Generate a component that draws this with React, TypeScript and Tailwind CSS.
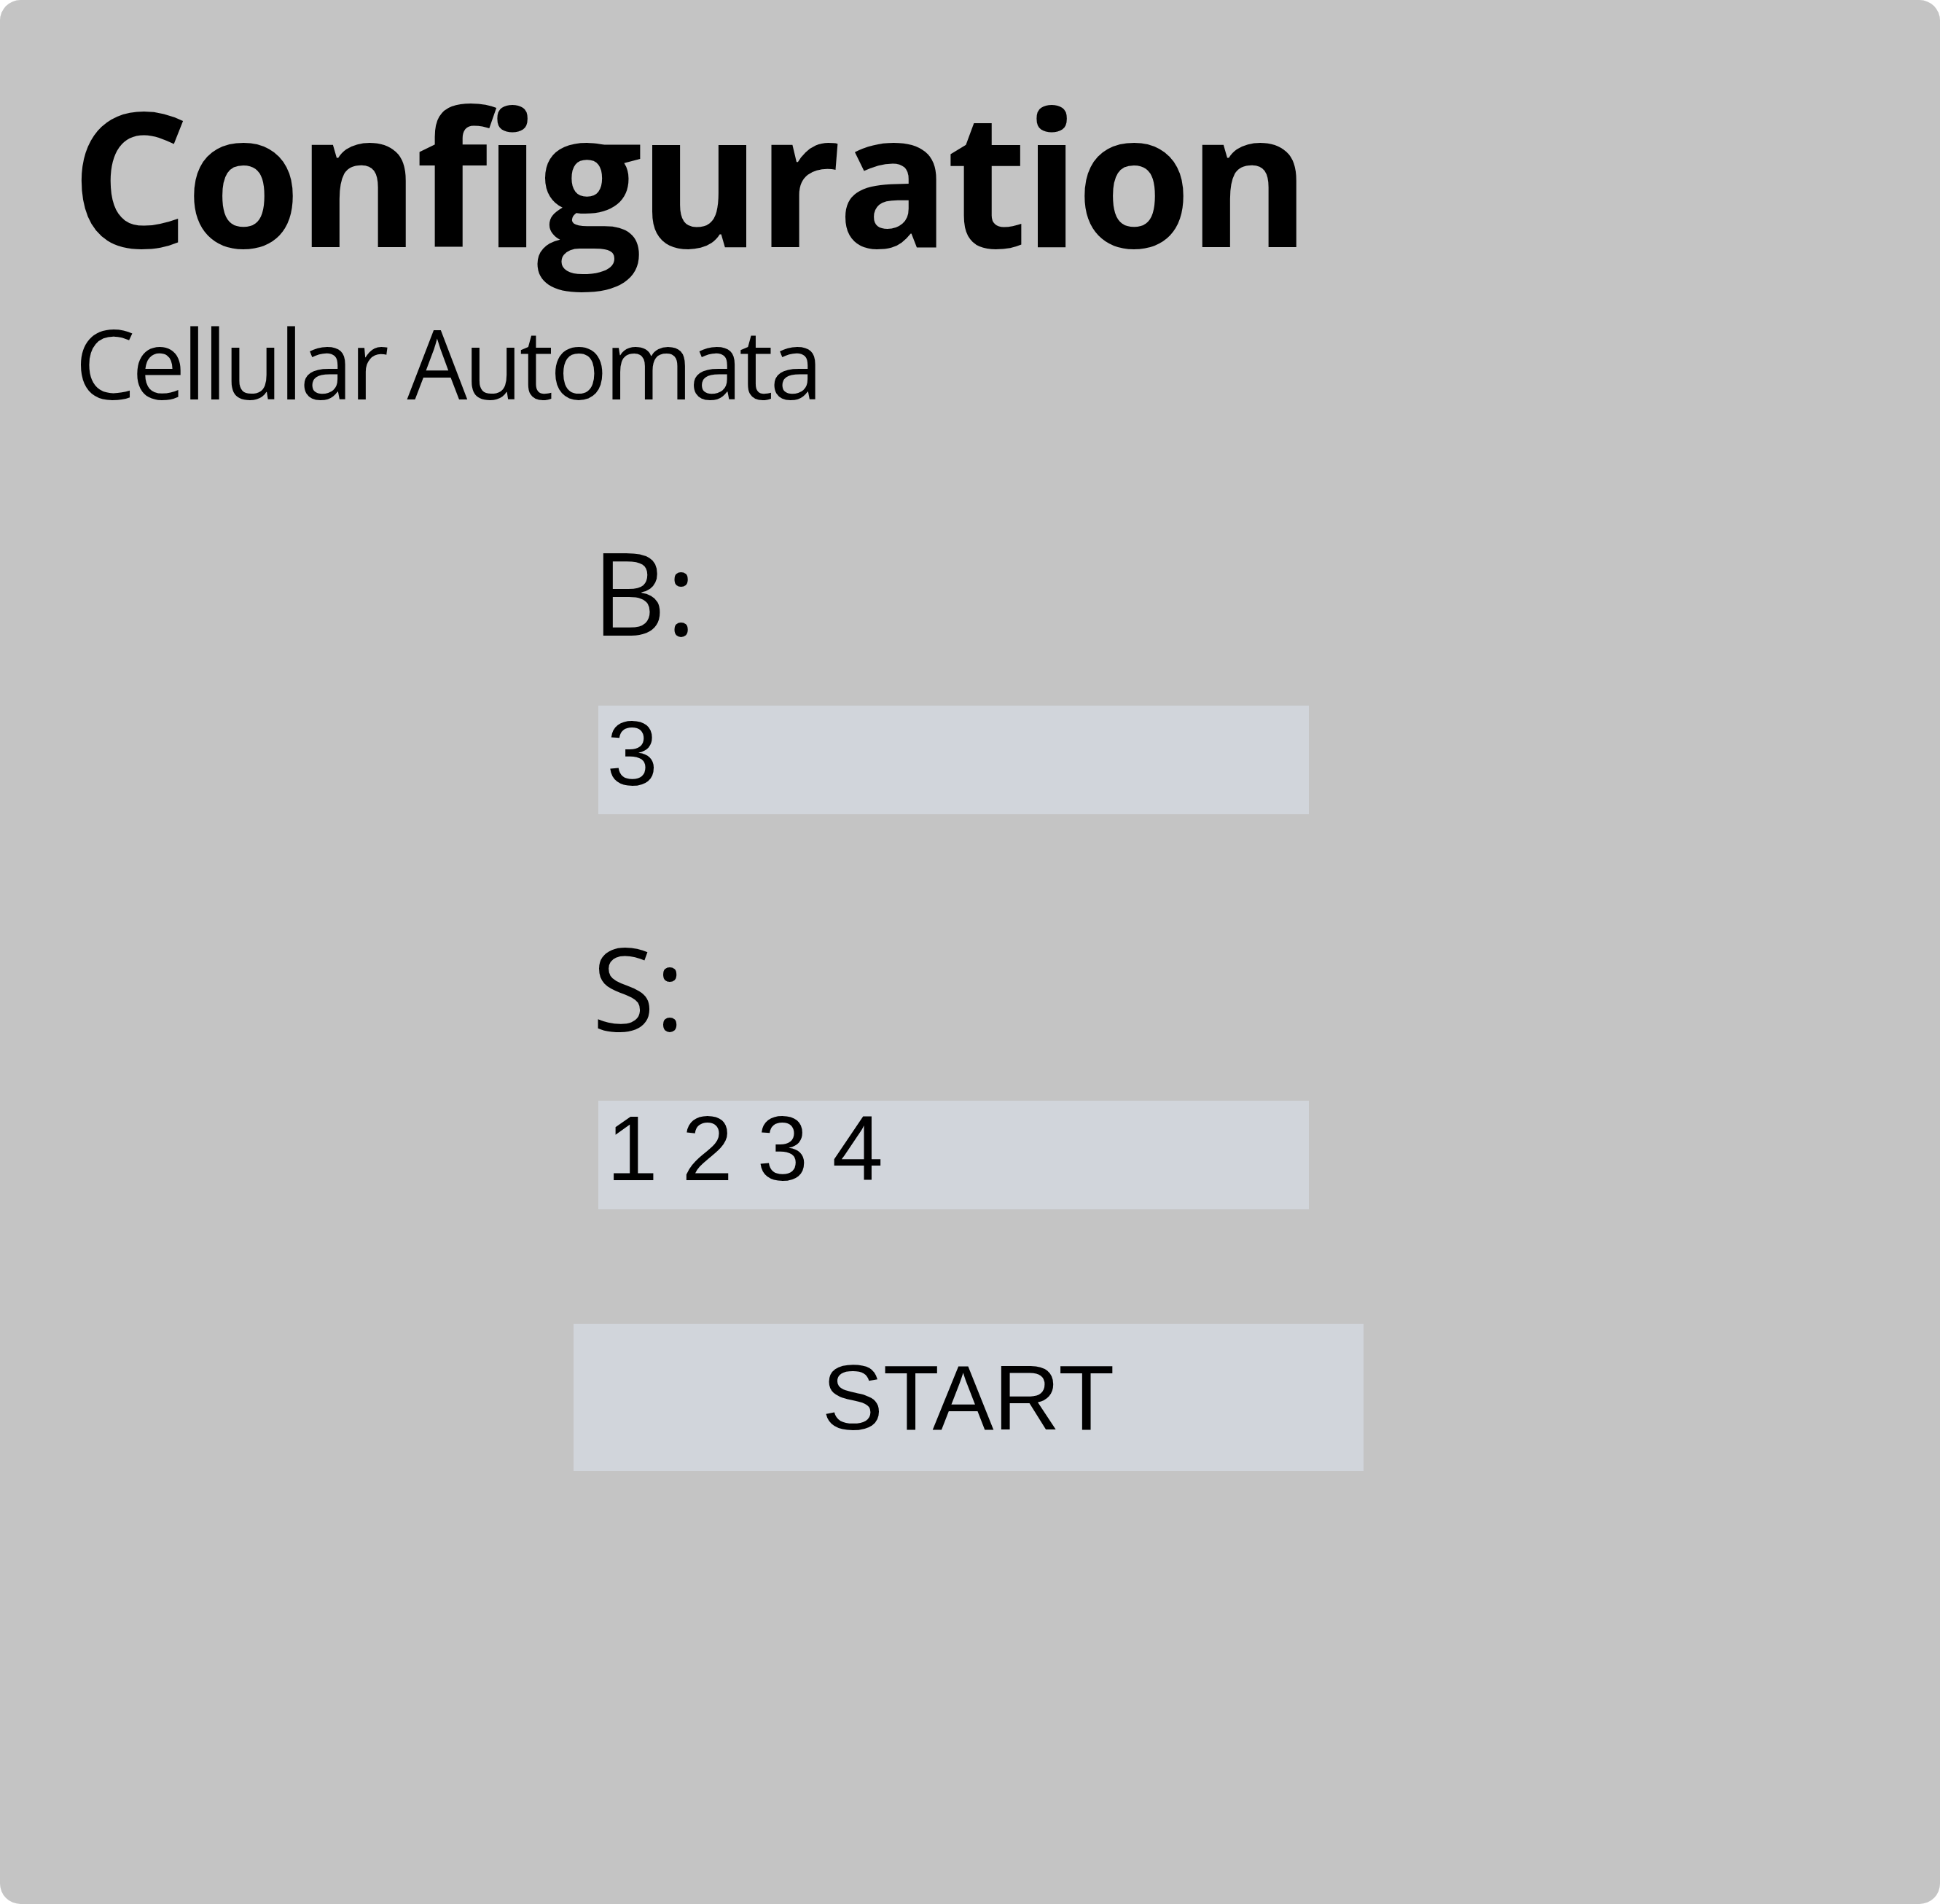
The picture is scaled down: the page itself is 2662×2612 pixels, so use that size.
import React, { useState } from 'react';

// Rule-string field: label above a flat grey input
const RuleField: React.FC<{ label: string; value: string; onChange: (v: string) => void }> = ({ label, value, onChange }) => (
    <div className="flex flex-col">
        <label className="ml-[26px] text-[157px] leading-none text-black font-['Open_Sans',sans-serif]">{label}</label>
        <input
            type="text"
            value={value}
            onChange={(e) => onChange(e.target.value)}
            className="ml-[34px] mt-[78px] h-[149px] w-[975px] bg-[#d1d5db] px-3 pb-[18px] text-[126px] tracking-[-1px] text-black font-['Liberation_Sans',Arial,sans-serif] outline-none"
        />
    </div>
);

const App: React.FC = () => {
    const [born, setBorn] = useState('3');
    const [survive, setSurvive] = useState('1 2 3 4');

    return (
        <div className="h-[2612px] w-full bg-white">
            <div className="h-full w-full rounded-[28px] bg-[#c4c4c4] pt-[112px] pl-[97px]">
                <h1 className="text-[256px] leading-none font-bold tracking-[-5.5px] text-black font-['Open_Sans',sans-serif]">Configuration</h1>
                <p className="ml-[6px] mt-[64px] text-[131px] leading-none tracking-[-4.5px] text-black font-['Open_Sans',sans-serif]">Cellular Automata</p>

                <div className="mx-auto mt-[170px] flex w-[1084px] -translate-x-[51px] flex-col">
                    <RuleField label="B:" value={born} onChange={setBorn} />
                    <div className="mt-[158px]">
                        <RuleField label="S:" value={survive} onChange={setSurvive} />
                    </div>
                    <button className="mt-[157px] h-[202px] w-[1084px] bg-[#d1d5db] text-[126px] text-black font-['Liberation_Sans',Arial,sans-serif]">
                        START
                    </button>
                </div>
            </div>
        </div>
    );
};

export default App;
